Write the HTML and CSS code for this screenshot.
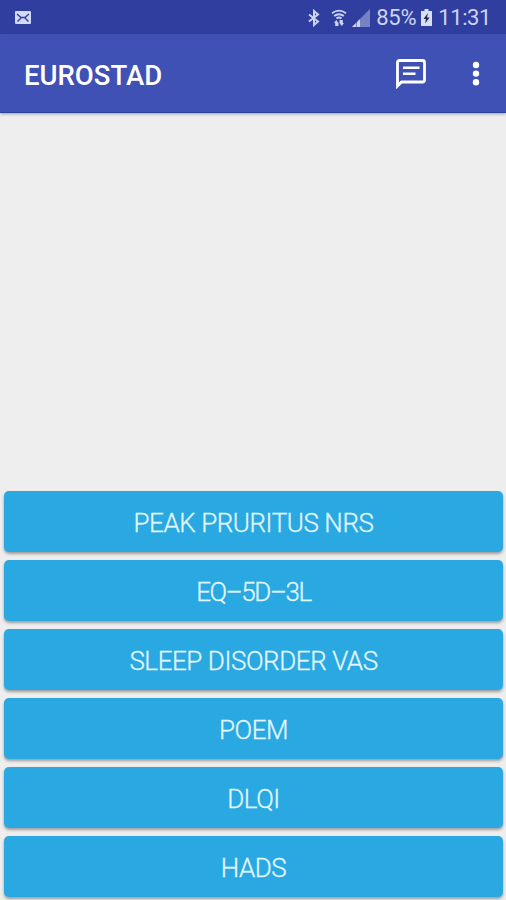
FILE: index.html
```html
<!DOCTYPE html>
<html lang="en">
<head>
    <meta charset="utf-8">
    <title>EUROSTAD</title>
    <link rel="stylesheet" href="styles.css">
</head>
<body>
    <!-- Status bar -->
    <div class="status-bar">
        <svg class="mail" width="16" height="13" viewBox="0 0 16 13">
            <rect width="16" height="13" rx="1" fill="#d3daf5"/>
            <path d="M2 3L6 6.500H10L14 3M2.500 10.500L6 7M13.500 10.500L10 7" fill="none" stroke="#303f9f" stroke-width="1.400"/>
        </svg>
        <svg class="bluetooth" width="12" height="18" viewBox="0 0 12 18">
            <path d="M1 5.500L10 12.500L6 16V2L10 5.500L1 12.500" fill="none" stroke="#cdd4f3" stroke-width="2"/>
        </svg>
        <svg class="wifi" width="16" height="18" viewBox="0 0 16 18">
            <path d="M1 4.300Q8 -1 15 4.300M3.200 7Q8 3.300 12.800 7M5.500 9.500Q8 7.500 10.500 9.500" fill="none" stroke="#cdd4f3" stroke-width="1.900"/>
            <path d="M3 14L5.250 11L7.500 14V17H4.200V14ZM8.500 14V11H11.800V14H13L10.750 17Z" fill="#cdd4f3"/>
        </svg>
        <svg class="signal" width="18" height="18" viewBox="0 0 18 18">
            <path d="M0 18L18 0V18Z" fill="#7682c6"/>
            <path d="M0 18L4 14V18ZM5 18V13L8 10V18Z" fill="#cdd4f3"/>
        </svg>
        <span class="percent">85%</span>
        <svg class="battery" width="11" height="17" viewBox="0 0 11 17">
            <path d="M3.500 0H7.500V2H11V17H0V2H3.500Z" fill="#d9dff6"/>
            <path d="M7 4L2.500 10H5L4 14.500L8.700 8.500H6Z" fill="#20264f"/>
        </svg>
        <span class="clock">11:31</span>
    </div>

    <!-- App bar -->
    <header class="app-bar">
        <h1>EUROSTAD</h1>
        <svg class="chat" width="30" height="30" viewBox="0 0 30 30">
            <path d="M1.500 27V3.500Q1.500 1.500 3.500 1.500H26.500Q28.500 1.500 28.500 3.500V21Q28.500 23 26.500 23H5.500Z" fill="none" stroke="#fff" stroke-width="2.800"/>
            <path d="M7 8.800H23.500M7 14.800H19.500" stroke="#fff" stroke-width="2.600"/>
        </svg>
        <svg class="more" width="8" height="26" viewBox="0 0 8 26">
            <circle cx="4" cy="4" r="3.200" fill="#fff"/>
            <circle cx="4" cy="12.600" r="3.200" fill="#fff"/>
            <circle cx="4" cy="21.200" r="3.200" fill="#fff"/>
        </svg>
    </header>

    <!-- Questionnaires -->
    <main class="forms">
        <button>PEAK PRURITUS NRS</button>
        <button class="tight">EQ–5D–3L</button>
        <button>SLEEP DISORDER VAS</button>
        <button>POEM</button>
        <button>DLQI</button>
        <button>HADS</button>
    </main>
</body>
</html>
```
FILE: styles.css
```css
* {
    box-sizing: border-box;
}

body {
    margin: 0;
    height: 900px;
    display: flex;
    flex-direction: column;
    overflow: hidden;
    background-color: #eeeeee;
    font-family: Roboto, "Liberation Sans", sans-serif;
}

svg {
    display: block;
    flex: none;
}

.status-bar {
    height: 34px;
    padding: 1px 15px 0 15px;
    display: flex;
    align-items: center;
    background-color: #303f9f;
    color: #cdd4f3;
    font-size: 22px;
    line-height: 34px;
}

.bluetooth {
    margin-left: auto;
}

.wifi {
    margin-left: 11px;
}

.signal {
    margin-left: 5px;
}

.percent {
    margin-left: 6px;
    letter-spacing: -0.3px;
}

.battery {
    margin-left: 5px;
}

.clock {
    margin-left: 6px;
    letter-spacing: -0.4px;
}

.app-bar {
    height: 79px;
    padding: 2px 26px 0 24px;
    display: flex;
    align-items: center;
    background-color: #3f51b5;
    border-bottom: 1px solid #2c409f;
    box-shadow: 0 1px 3px rgba(0, 0, 0, 0.35);
}

h1 {
    margin: 2px 0 0;
    color: #fff;
    font-size: 27.500px;
    font-weight: 500;
}

.chat {
    margin-left: auto;
}

.more {
    margin-left: 46px;
}

.forms {
    margin-top: auto;
    padding: 0 3px 3px 4px;
    display: flex;
    flex-direction: column;
    gap: 8px;
}

button {
    height: 61px;
    padding: 2px 0 0;
    border: none;
    border-radius: 5px;
    background-color: #29a8e1;
    box-shadow: 0 2px 3px rgba(0, 0, 0, 0.35);
    color: #e2f7ff;
    font-family: inherit;
    font-size: 26px;
    font-weight: 300;
    letter-spacing: -0.430px;
    -webkit-text-stroke: 0.300px #e2f7ff;
}

.tight {
    letter-spacing: -1.400px;
}
```
